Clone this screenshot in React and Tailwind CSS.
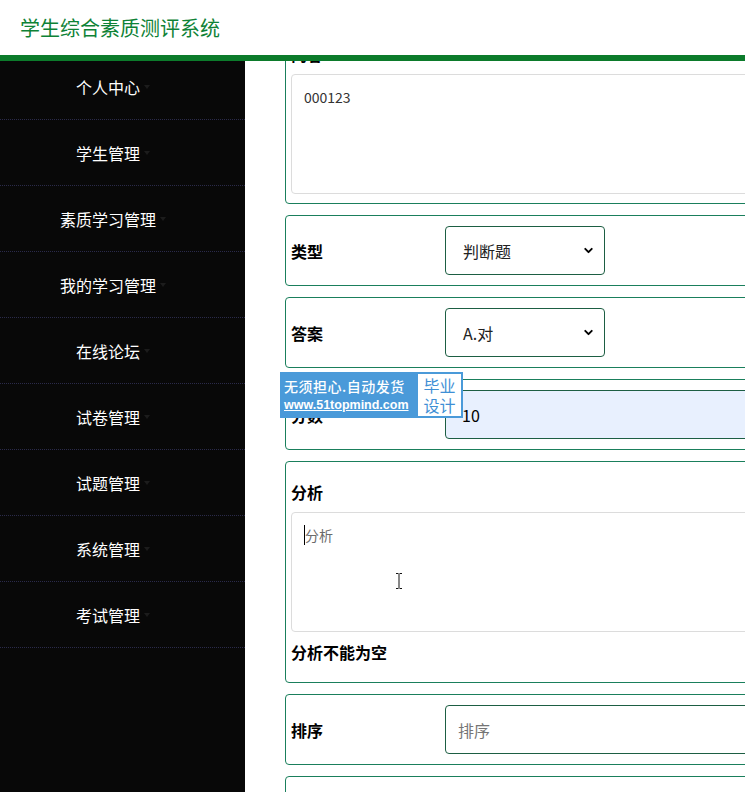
import { ChevronDown } from "lucide-react";

const menu = [
  "个人中心",
  "学生管理",
  "素质学习管理",
  "我的学习管理",
  "在线论坛",
  "试卷管理",
  "试题管理",
  "系统管理",
  "考试管理",
];

function SelectRow({ label, value }) {
  return (
    <div className="flex items-center h-[71px] px-[5px] border border-[#1a7f5c] rounded-[4px] bg-white">
      <span className="w-[154px] font-bold text-[16px] text-black">{label}</span>
      <div className="w-[160px] h-[49px] flex items-center justify-between pl-[17px] pr-[9px] border border-[#1d5e43] rounded-[4px] text-[16px] text-[#222]">
        <span>{value}</span>
        <ChevronDown size={13} strokeWidth={3.5} className="text-black" />
      </div>
    </div>
  );
}

function InputRow({ label, value, placeholder, filled }) {
  return (
    <div className="flex items-center h-[71px] px-[5px] border border-[#1a7f5c] rounded-[4px] bg-white">
      <span className="w-[154px] font-bold text-[16px] text-black">{label}</span>
      <div
        className={
          "flex-1 h-[49px] flex items-center border border-[#1d5e43] rounded-[4px] text-[16px] " +
          (filled ? "bg-[#e8f0fe] pl-[16px] text-black" : "bg-white pl-[12px] text-[#757575]")
        }
      >
        {value || placeholder}
      </div>
    </div>
  );
}

export default function App() {
  return (
    <div className="w-[745px] h-[792px] overflow-hidden bg-white font-['Noto_Sans_CJK_SC','Noto_Sans',sans-serif]">
      <header className="h-[55px] flex items-center pl-[20px]">
        <h1 className="text-[20px] text-[#0e8236]">学生综合素质测评系统</h1>
      </header>
      <div className="h-[6px] bg-[#0c7b2b]" />

      <div className="flex h-[731px]">
        <aside className="w-[245px] shrink-0 bg-[#080808] overflow-hidden">
          <ul className="-mt-[7px]">
            {menu.map((m) => (
              <li
                key={m}
                className="h-[66px] flex items-center justify-center pr-[19px] border-b border-dotted border-[#2a2a4a]"
              >
                <span className="text-white text-[16px]">{m}</span>
                <span className="ml-[4px] w-0 h-0 border-l-[3px] border-r-[3px] border-t-[4px] border-l-transparent border-r-transparent border-t-[#1c1c1c]" />
              </li>
            ))}
          </ul>
        </aside>

        <main className="relative flex-1 overflow-hidden">
          <div className="w-[700px] ml-[40px] -mt-[38px] flex flex-col gap-[11px]">
            <div className="px-[5px] pb-[9px] border border-[#1a7f5c] rounded-[4px] bg-white">
              <div className="h-[50px] flex items-end pb-[8px] font-bold text-[16px]">内容</div>
              <div className="h-[120px] border border-[#dcdcdc] rounded-[4px] px-[12px] pt-[12px] text-[14px] text-[#333]">
                000123
              </div>
            </div>

            <SelectRow label="类型" value="判断题" />
            <SelectRow label="答案" value="A.对" />
            <InputRow label="分数" value="10" filled />

            <div className="px-[5px] pt-[10px] pb-[10px] border border-[#1a7f5c] rounded-[4px] bg-white">
              <div className="h-[40px] flex items-center font-bold text-[16px]">分析</div>
              <div className="relative h-[120px] border border-[#dcdcdc] rounded-[4px] px-[12px] pt-[12px] text-[14px] text-[#6b6b6b]">
                <span className="border-l border-black">分析</span>
                <svg
                  className="absolute left-[103px] top-[60px]"
                  width="8"
                  height="16"
                  viewBox="0 0 8 16"
                  fill="none"
                  stroke="#111"
                  strokeWidth="1"
                >
                  <path d="M1 0.5h2.5M4.5 0.5h2.5M4 1v14M1 15.5h2.5M4.5 15.5h2.5" />
                </svg>
              </div>
              <div className="h-[40px] flex items-center font-bold text-[16px]">分析不能为空</div>
            </div>

            <InputRow label="排序" placeholder="排序" />

            <div className="h-[71px] border border-[#1a7f5c] rounded-[4px] bg-white" />
          </div>

          <div className="absolute left-[35px] top-[311px] flex h-[46px] bg-[#4a9ad9]">
            <div className="w-[136px] flex flex-col justify-center pl-[4px] text-white">
              <span className="text-[14px] font-medium leading-[20px] tracking-[0.5px]">无须担心.自动发货</span>
              <span className="text-[12.5px] font-bold leading-[18px] underline font-['Liberation_Sans',sans-serif]">
                www.51topmind.com
              </span>
            </div>
            <div className="w-[47px] flex flex-col items-center justify-center bg-white border-2 border-[#4a9ad9] text-[#3f8fd5] text-[16px] leading-[20px]">
              <span>毕业</span>
              <span>设计</span>
            </div>
          </div>
        </main>
      </div>
    </div>
  );
}
